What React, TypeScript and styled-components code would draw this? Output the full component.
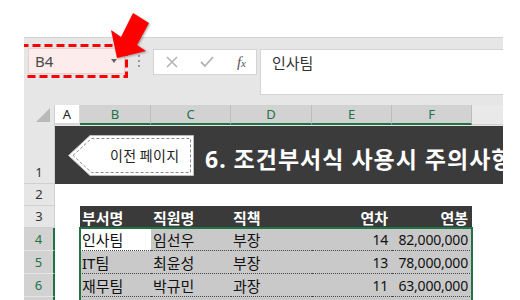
import React from "react"
import styled, { createGlobalStyle } from "styled-components"

const GlobalStyle = createGlobalStyle`
    html, body {
        margin:0;
        padding:0;
        background:#ffffff;
    }
    body {
        font-family:"Noto Sans","Noto Sans CJK KR",sans-serif;
    }
`

const green = "#217346"
const font = `"Noto Sans","Noto Sans CJK KR",sans-serif`

interface Col {
    key:string;
    width:number;
}

const columns:Array<Col> = [
    {key:"B",width:71},
    {key:"C",width:80},
    {key:"D",width:81},
    {key:"E",width:80},
    {key:"F",width:80},
]

const headers = ["부서명","직원명","직책","연차","연봉"]
const rows = [
    ["인사팀","임선우","부장","14","82,000,000"],
    ["IT팀","최윤성","부장","13","78,000,000"],
    ["재무팀","박규민","과장","11","63,000,000"],
]
const rightAligned = [false,false,false,true,true]

const App = () => {
    return(
        <>
            <GlobalStyle/>
            <Page>
                <Window>
                    <FormulaBar>
                        <NameBoxWrap>
                            <NameBox>
                                <span>B4</span>
                                <Caret/>
                            </NameBox>
                            <Marker width="109" height="34" viewBox="0 0 109 34">
                                <rect x="1.5" y="1.5" width="106" height="31" fill="none" stroke="#ff0000" strokeWidth="3" strokeDasharray="8 4"/>
                            </Marker>
                        </NameBoxWrap>
                        <Grip>
                            <i/><i/><i/>
                        </Grip>
                        <ToolBox>
                            <svg width="12" height="12" viewBox="0 0 12 12">
                                <path d="M1 1 L11 11 M11 1 L1 11" stroke="#b4b4b4" strokeWidth="1.6" fill="none"/>
                            </svg>
                            <svg width="14" height="12" viewBox="0 0 14 12">
                                <path d="M1 6 L5 10 L13 1" stroke="#b4b4b4" strokeWidth="1.8" fill="none"/>
                            </svg>
                            <Fx>f<sub>x</sub></Fx>
                        </ToolBox>
                        <FormulaInput>인사팀</FormulaInput>
                    </FormulaBar>
                    <HeaderRow>
                        <Corner>
                            <svg width="14" height="14" viewBox="0 0 14 14">
                                <polygon points="14,0 14,14 0,14" fill="#b9b9b9"/>
                            </svg>
                        </Corner>
                        <ColHead width={25}>A</ColHead>
                        {columns.map((col)=>(
                            <ColHead key={col.key} width={col.width} selected>{col.key}</ColHead>
                        ))}
                        <ColFill/>
                    </HeaderRow>
                    <Sheet>
                        <Row height={59}>
                            <RowHead>1</RowHead>
                            <Band>
                                <Tag>
                                    <TagShape width="126" height="41" viewBox="0 0 126 41">
                                        <polygon points="0.5,20.5 22,0.5 125.5,0.5 125.5,40.5 22,40.5" fill="#ffffff" stroke="#bdbdbd"/>
                                        <polygon points="5,20.5 23.5,3.5 122.5,3.5 122.5,37.5 23.5,37.5" fill="none" stroke="#8a8a8a" strokeDasharray="3 2"/>
                                    </TagShape>
                                    <TagLabel>이전 페이지</TagLabel>
                                </Tag>
                                <Title>6. 조건부서식 사용시 주의사항</Title>
                            </Band>
                        </Row>
                        <Row height={22}>
                            <RowHead>2</RowHead>
                            <Blank/>
                        </Row>
                        <Row height={22}>
                            <RowHead>3</RowHead>
                            <ColA/>
                            {headers.map((h,i)=>(
                                <HeadCell key={h} width={columns[i].width} right={rightAligned[i]}>{h}</HeadCell>
                            ))}
                            <Blank/>
                        </Row>
                        <DataBlock>
                            {rows.map((r,ri)=>(
                                <Row height={23} key={r[0]}>
                                    <RowHead selected>{ri+4}</RowHead>
                                    <ColA/>
                                    {r.map((v,i)=>(
                                        <DataCell key={i} width={columns[i].width} right={rightAligned[i]} active={ri===0 && i===0}>{v}</DataCell>
                                    ))}
                                    <Blank/>
                                </Row>
                            ))}
                            <Row height={23}>
                                <RowHead selected/>
                                <ColA/>
                                {columns.map((col)=>(
                                    <DataCell key={col.key} width={col.width}/>
                                ))}
                                <Blank/>
                            </Row>
                            <Selection/>
                        </DataBlock>
                    </Sheet>
                </Window>
                <Arrow width="55" height="60" viewBox="100 5 55 60">
                    <polygon points="117,58 111,30 121,37 133,13 149,23 137,45 146,51" fill="#ff0000"/>
                </Arrow>
            </Page>
        </>
    )
}

const Page = styled.div`
    position:relative;
    width:520px;
    height:300px;
    overflow:hidden;
    background:#ffffff;
    padding:37px 17px 0 24px;
    box-sizing:border-box;
`
const Window = styled.div`
    height:263px;
    overflow:hidden;
    background:#e6e6e6;
    border-top:1px solid #d2d2d2;
    font-family:${font};
`
const FormulaBar = styled.div`
    display:flex;
    align-items:flex-start;
    height:67px;
    padding:10px 0 0 4px;
    box-sizing:border-box;
`
const NameBoxWrap = styled.div`
    position:relative;
    flex:none;
`
const NameBox = styled.div`
    display:flex;
    align-items:center;
    justify-content:space-between;
    width:97px;
    height:26px;
    box-sizing:border-box;
    padding:0 7px 0 6px;
    background:#fcecec;
    border:1px solid #e2d2d2;
    font-size:15px;
    color:#4a4a4a;
`
const Caret = styled.div`
    width:0;
    height:0;
    border-left:3.5px solid transparent;
    border-right:3.5px solid transparent;
    border-top:4px solid #666666;
`
const Marker = styled.svg`
    position:absolute;
    left:-9px;
    top:-4px;
`
const Grip = styled.div`
    display:flex;
    flex-direction:column;
    align-items:center;
    gap:3px;
    width:28px;
    padding-top:7px;
    flex:none;
    i {
        display:block;
        width:2px;
        height:2px;
        background:#9a9a9a;
    }
`
const ToolBox = styled.div`
    display:flex;
    align-items:center;
    justify-content:space-between;
    width:104px;
    height:26px;
    margin-top:1px;
    padding:0 10px 0 12px;
    box-sizing:border-box;
    background:#ffffff;
    border:1px solid #d4d4d4;
    flex:none;
`
const Fx = styled.span`
    font-family:"Liberation Serif",serif;
    font-style:italic;
    font-size:15px;
    color:#555555;
    sub {
        font-size:11px;
        vertical-align:baseline;
    }
`
const FormulaInput = styled.div`
    flex:1;
    height:46px;
    margin:1px 0 0 3px;
    padding:3px 0 0 11px;
    box-sizing:border-box;
    background:#ffffff;
    border:1px solid #d4d4d4;
    border-right:none;
    font-size:15px;
    color:#333333;
    line-height:20px;
`
const HeaderRow = styled.div`
    display:flex;
    height:20px;
`
const Corner = styled.div`
    width:31px;
    flex:none;
    display:flex;
    align-items:flex-end;
    justify-content:flex-end;
    padding:0 4px 3px 0;
    box-sizing:border-box;
    border-right:1px solid #cfcfcf;
`
const ColHead = styled.div<{width:number,selected?:boolean}>`
    width:${p=>p.width}px;
    flex:none;
    box-sizing:border-box;
    display:flex;
    align-items:center;
    justify-content:center;
    font-size:13px;
    color:${p=>p.selected ? green : "#222222"};
    background:${p=>p.selected ? "#d2d2d2" : "#ffffff"};
    border-right:1px solid ${p=>p.selected ? "#bdbdbd" : "#d8d8d8"};
    border-bottom:2px solid ${p=>p.selected ? green : "#d8d8d8"};
`
const ColFill = styled.div`
    flex:1;
    background:#e9e9e9;
    border-bottom:1px solid #d0d0d0;
`
const Sheet = styled.div`
    display:flex;
    flex-direction:column;
`
const Row = styled.div<{height:number}>`
    display:flex;
    height:${p=>p.height}px;
    flex:none;
`
const RowHead = styled.div<{selected?:boolean}>`
    width:31px;
    flex:none;
    box-sizing:border-box;
    display:flex;
    align-items:flex-end;
    justify-content:center;
    padding-bottom:2px;
    font-size:13px;
    color:${p=>p.selected ? green : "#333333"};
    background:${p=>p.selected ? "#d2d2d2" : "#e6e6e6"};
    border-bottom:1px solid ${p=>p.selected ? "#e4e4e4" : "#d0d0d0"};
    border-right:${p=>p.selected ? `2px solid ${green}` : "1px solid #cfcfcf"};
`
const Band = styled.div`
    flex:1;
    display:flex;
    align-items:center;
    background:#3b3b3b;
    padding-left:13px;
    margin-top:1px;
    white-space:nowrap;
`
const Tag = styled.div`
    position:relative;
    width:126px;
    height:41px;
    flex:none;
    display:flex;
    align-items:center;
    padding-left:42px;
    box-sizing:border-box;
`
const TagShape = styled.svg`
    position:absolute;
    left:0;
    top:0;
`
const TagLabel = styled.span`
    position:relative;
    font-family:"Noto Sans CJK KR",sans-serif;
    font-size:14px;
    color:#222222;
    letter-spacing:0.3px;
`
const Title = styled.div`
    margin-left:11px;
    font-family:"Noto Sans","Noto Sans CJK KR",sans-serif;
    font-weight:700;
    font-size:23px;
    letter-spacing:1px;
    color:#ffffff;
    margin-top:6px;
`
const Blank = styled.div`
    flex:1;
    background:#ffffff;
`
const ColA = styled.div`
    width:25px;
    flex:none;
    background:#ffffff;
`
const HeadCell = styled.div<{width:number,right?:boolean}>`
    width:${p=>p.width}px;
    flex:none;
    box-sizing:border-box;
    display:flex;
    align-items:center;
    justify-content:${p=>p.right ? "flex-end" : "flex-start"};
    padding:0 4px 0 2px;
    background:#3a3a3a;
    color:#ffffff;
    font-weight:700;
    font-size:15px;
    font-family:"Noto Sans CJK KR",sans-serif;
`
const DataBlock = styled.div`
    position:relative;
    display:flex;
    flex-direction:column;
`
const DataCell = styled.div<{width:number,right?:boolean,active?:boolean}>`
    width:${p=>p.width}px;
    flex:none;
    box-sizing:border-box;
    display:flex;
    align-items:center;
    justify-content:${p=>p.right ? "flex-end" : "flex-start"};
    padding:0 4px 0 2px;
    background:${p=>p.active ? "#ffffff" : "#c9c9c9"};
    border-bottom:1px dotted #4a4a4a;
    color:#111111;
    font-size:${p=>p.right ? "14px" : "15px"};
    letter-spacing:${p=>p.right ? "-0.2px" : "0"};
    white-space:nowrap;
`
const Selection = styled.div`
    position:absolute;
    left:55px;
    top:-1px;
    width:394px;
    height:120px;
    box-sizing:border-box;
    border:2px solid ${green};
    pointer-events:none;
`
const Arrow = styled.svg`
    position:absolute;
    left:100px;
    top:5px;
    filter:drop-shadow(1px 1px 1px rgba(0,0,0,0.35));
`

export default App
